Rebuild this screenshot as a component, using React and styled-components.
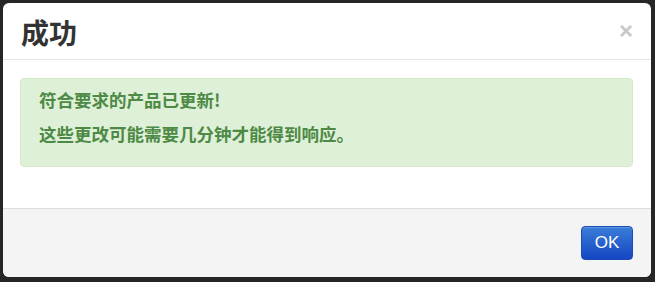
import React from 'react';
import styled, { createGlobalStyle } from 'styled-components';

const GlobalStyle = createGlobalStyle`
  html, body {
    margin: 0;
    padding: 0;
    background: #262626;
  }
  body {
    font-family: "Helvetica Neue", "Liberation Sans", "Noto Sans CJK SC", sans-serif;
  }
`;

const Backdrop = styled.div`
  box-sizing: border-box;
  width: 655px;
  height: 282px;
  padding: 3px 4px 5px 3px;
`;

const Modal = styled.div`
  display: flex;
  flex-direction: column;
  height: 100%;
  background: #fff;
  border-radius: 6px;
  overflow: hidden;
`;

const Header = styled.div`
  display: flex;
  align-items: center;
  justify-content: space-between;
  height: 57px;
  box-sizing: border-box;
  padding: 1px 18px 0 18px;
  border-bottom: 1px solid #e5e5e5;
`;

const Title = styled.h3`
  margin: 0;
  font-family: "Noto Sans CJK SC", sans-serif;
  font-size: 28px;
  line-height: 32px;
  font-weight: 700;
  color: #333;
`;

const Close = styled.button`
  border: 0;
  background: none;
  padding: 0;
  margin-top: -2px;
  font-family: "Liberation Sans", sans-serif;
  font-size: 24px;
  line-height: 20px;
  font-weight: 700;
  color: #c8c8c8;
  cursor: pointer;
`;

const Body = styled.div`
  flex: 1;
  padding: 18px 18px 0 17px;
`;

const Alert = styled.div`
  padding: 9px 18px 10px;
  background: #dff0d8;
  border: 1px solid #d6e9c6;
  border-radius: 4px;
  color: #4d8a45;
  font-family: "Noto Sans CJK SC", sans-serif;
  font-weight: 700;
  font-size: 17.5px;
`;

const Line = styled.p`
  margin: 0 0 10px;
  line-height: 24px;
`;

const Footer = styled.div`
  display: flex;
  justify-content: flex-end;
  height: 69px;
  box-sizing: border-box;
  padding: 17px 18px 17px;
  background: #f4f4f4;
  border-top: 1px solid #dcdcdc;
`;

const Button = styled.button`
  width: 52px;
  height: 34px;
  border: 1px solid #1b4cb3;
  border-radius: 4px;
  background: linear-gradient(to bottom, #3a7dd8, #1546c3);
  box-shadow: inset 0 1px 0 rgba(255, 255, 255, 0.2);
  color: #fff;
  font-family: "Liberation Sans", sans-serif;
  font-size: 17px;
  cursor: pointer;
`;

export default function App() {
  return (
    <>
      <GlobalStyle />
      <Backdrop>
        <Modal>
          <Header>
            <Title>成功</Title>
            <Close aria-label="关闭">×</Close>
          </Header>
          <Body>
            <Alert>
              <Line>符合要求的产品已更新!</Line>
              <Line>这些更改可能需要几分钟才能得到响应。</Line>
            </Alert>
          </Body>
          <Footer>
            <Button>OK</Button>
          </Footer>
        </Modal>
      </Backdrop>
    </>
  );
}
